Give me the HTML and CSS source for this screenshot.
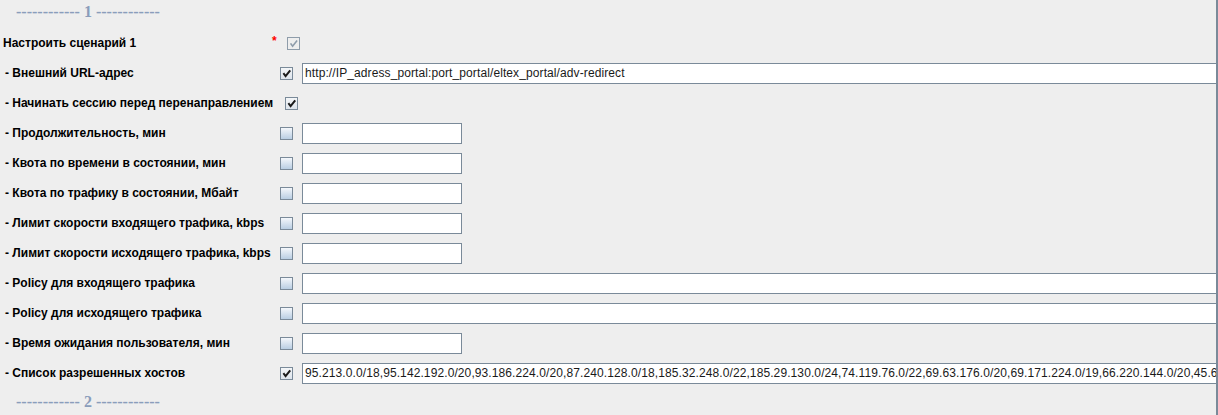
FILE: index.html
```html
<!DOCTYPE html>
<html lang="ru">
<head>
<meta charset="utf-8">
<title>Сценарии</title>
<link rel="stylesheet" href="styles.css">
</head>
<body>
<div class="panel">
  <div class="sep">------------ 1 ------------</div>

  <div class="row">
    <div class="label label-main">Настроить сценарий 1</div>
    <span class="req">*</span>
    <span class="cb cb-disabled"><svg viewBox="0 0 11 11"><path d="M3 6 L4.6 8.2 L8.6 3.2" /></svg></span>
  </div>

  <div class="row">
    <div class="label">- Внешний URL-адрес</div>
    <span class="cb cb-checked"><svg viewBox="0 0 11 11"><path d="M3 6 L4.6 8.2 L8.6 3.2" /></svg></span>
    <div class="field field-full">http://IP_adress_portal:port_portal/eltex_portal/adv-redirect</div>
  </div>

  <div class="row">
    <div class="label label-wide">- Начинать сессию перед перенаправлением</div>
    <span class="cb cb-checked"><svg viewBox="0 0 11 11"><path d="M3 6 L4.6 8.2 L8.6 3.2" /></svg></span>
  </div>

  <div class="row">
    <div class="label">- Продолжительность, мин</div>
    <span class="cb"></span>
    <div class="field field-short"></div>
  </div>

  <div class="row">
    <div class="label">- Квота по времени в состоянии, мин</div>
    <span class="cb"></span>
    <div class="field field-short"></div>
  </div>

  <div class="row">
    <div class="label">- Квота по трафику в состоянии, Мбайт</div>
    <span class="cb"></span>
    <div class="field field-short"></div>
  </div>

  <div class="row">
    <div class="label">- Лимит скорости входящего трафика, kbps</div>
    <span class="cb"></span>
    <div class="field field-short"></div>
  </div>

  <div class="row">
    <div class="label">- Лимит скорости исходящего трафика, kbps</div>
    <span class="cb"></span>
    <div class="field field-short"></div>
  </div>

  <div class="row">
    <div class="label">- Policy для входящего трафика</div>
    <span class="cb"></span>
    <div class="field field-full"></div>
  </div>

  <div class="row">
    <div class="label">- Policy для исходящего трафика</div>
    <span class="cb"></span>
    <div class="field field-full"></div>
  </div>

  <div class="row">
    <div class="label">- Время ожидания пользователя, мин</div>
    <span class="cb"></span>
    <div class="field field-short"></div>
  </div>

  <div class="row">
    <div class="label">- Список разрешенных хостов</div>
    <span class="cb cb-checked"><svg viewBox="0 0 11 11"><path d="M3 6 L4.6 8.2 L8.6 3.2" /></svg></span>
    <div class="field field-full">95.213.0.0/18,95.142.192.0/20,93.186.224.0/20,87.240.128.0/18,185.32.248.0/22,185.29.130.0/24,74.119.76.0/22,69.63.176.0/20,69.171.224.0/19,66.220.144.0/20,45.64.40.0/22</div>
  </div>

  <div class="sep sep-bottom">------------ 2 ------------</div>
</div>
</body>
</html>
```

FILE: styles.css
```css
html, body {
  margin: 0;
  padding: 0;
  background: #eeeeee;
}

.panel {
  width: 1216px;
  height: 415px;
  border-right: 2px solid #7a8a99;
  background: #eeeeee;
  overflow: hidden;
  font-family: "Liberation Sans", Arial, sans-serif;
  font-size: 12px;
  color: #000;
}

.sep {
  height: 28px;
  line-height: 24px;
  padding-left: 16px;
  font-family: "Liberation Serif", "Times New Roman", serif;
  font-size: 16px;
  font-weight: bold;
  color: #8a9dbb;
  white-space: pre;
}

.sep-bottom {
  line-height: 28px;
}

.row {
  display: flex;
  align-items: center;
  height: 30px;
}

.label {
  width: 280px;
  padding-left: 5px;
  box-sizing: border-box;
  font-weight: bold;
  white-space: nowrap;
  flex: none;
}

.label-main {
  width: 272px;
  padding-left: 3px;
}

.label-wide {
  width: 285px;
}

.req {
  color: #ff0000;
  font-weight: bold;
  width: 6px;
  margin-right: 9px;
  line-height: 12px;
  margin-top: -4px;
  flex: none;
}

.cb {
  width: 13px;
  height: 13px;
  box-sizing: border-box;
  border: 1px solid #7a8a99;
  background: linear-gradient(#f4f7fb, #b9cee3);
  flex: none;
  display: flex;
  align-items: center;
  justify-content: center;
}

.cb svg {
  width: 11px;
  height: 11px;
  fill: none;
  stroke: #1a1a1a;
  stroke-width: 2;
  stroke-linecap: square;
}

.cb-checked {
  background: linear-gradient(#f4f6f8, #dde4ec);
}

.cb-disabled {
  background: #eeeeee;
  border-color: #8e9caa;
}

.cb-disabled svg {
  stroke: #8e9caa;
  stroke-width: 1.6;
}

.field {
  height: 21px;
  box-sizing: border-box;
  margin-left: 9px;
  border: 1px solid #7a8a99;
  background: #ffffff;
  padding-left: 2px;
  line-height: 19px;
  letter-spacing: 0.1px;
  white-space: nowrap;
  overflow: hidden;
  color: #1a1a1a;
  flex: none;
}

.field-short {
  width: 160px;
}

.field-full {
  flex: 1 1 auto;
  min-width: 0;
  border-right: none;
}
```
